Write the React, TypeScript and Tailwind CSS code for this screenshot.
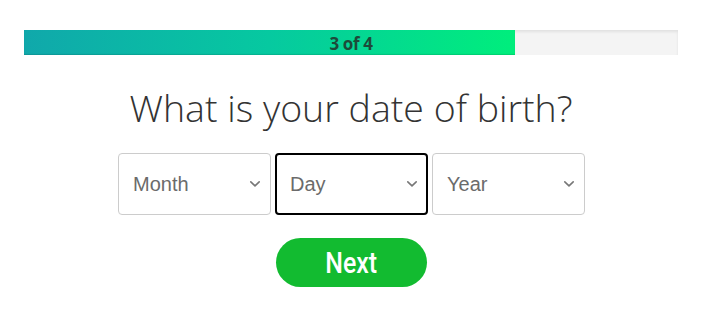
import React from "react";

function Chevron() {
  return (
    <svg width="12" height="8" viewBox="0 0 12 8" fill="none" className="shrink-0">
      <path d="M1.8 1.8 L6 5.8 L10.2 1.8" stroke="#777" strokeWidth="1.6" strokeLinecap="round" strokeLinejoin="round" />
    </svg>
  );
}

function SelectBox({ label, active }: { label: string; active?: boolean }) {
  return (
    <div
      className={`flex h-[62px] w-[153px] items-center justify-between rounded-[4px] bg-white ${
        active ? "border-2 border-black pl-[13px] pr-[8px]" : "border border-[#cccccc] pl-[14px] pr-[9px]"
      }`}
    >
      <span className="text-[20px] text-[#6b6b6b] [font-family:'Liberation_Sans',Arial,sans-serif]">{label}</span>
      <Chevron />
    </div>
  );
}

export default function App() {
  return (
    <div className="h-[325px] w-[702px] bg-white [font-family:'Open_Sans',sans-serif]">
      <div className="pl-[24px] pr-[24px] pt-[30px]">
        <div className="relative h-[25px] w-[654px] bg-[#f4f4f4] shadow-[inset_0_2px_3px_rgba(0,0,0,0.08)]">
          <div className="h-full w-[491px] bg-[linear-gradient(90deg,#10a8ab_0%,#06c9a0_50%,#00ee7c_100%)] shadow-[inset_0_-1px_1px_rgba(0,0,0,0.12)]" />
          <div className="absolute inset-0 flex items-center justify-center pt-[1px]">
            <span className="text-[17px] font-bold leading-none tracking-[-0.4px] text-[#1d4a3a]">3 of 4</span>
          </div>
        </div>
      </div>
      <h1 className="mt-[30px] text-center text-[37.5px] font-light leading-[46px] text-[#333333]">
        What is your date of birth?
      </h1>
      <div className="mt-[22px] flex justify-center gap-[4px] pl-[1px]">
        <SelectBox label="Month" />
        <SelectBox label="Day" active />
        <SelectBox label="Year" />
      </div>
      <div className="mt-[23px] flex justify-center">
        <button className="flex h-[49px] w-[151px] items-center justify-center rounded-full bg-[#12bb30] text-white">
          <span className="inline-block scale-x-[0.83] text-[30px] font-medium leading-none [font-family:Roboto,sans-serif]">Next</span>
        </button>
      </div>
    </div>
  );
}
